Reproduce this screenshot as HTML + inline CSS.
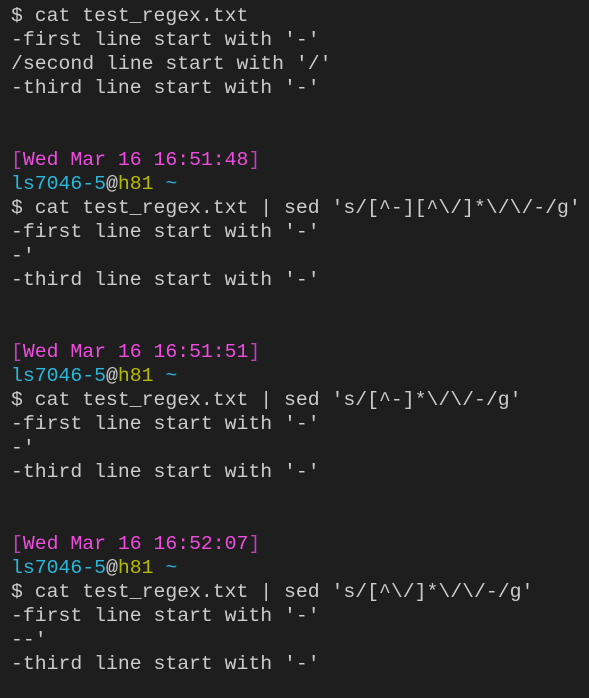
<html><head><style>
body{margin:0;background:#1e1e1e;width:589px;height:698px;overflow:hidden}
pre{margin:0;padding:4px 0 0 11px;font-family:"Liberation Mono",monospace;font-size:19.8px;line-height:24px;color:#cccccc}
.b{color:#bc3fbc}.m{color:#f14ce0}.c{color:#29b8db}.y{color:#b5ba00}
</style></head><body><pre>$ cat test_regex.txt
-first line start with '-'
/second line start with '/'
-third line start with '-'


<span class="b">[</span><span class="m">Wed Mar 16 16:51:48</span><span class="b">]</span>
<span class="c">ls7046-5</span>@<span class="y">h81</span> <span class="c">~</span>
$ cat test_regex.txt | sed 's/[^-][^\/]*\/\/-/g'
-first line start with '-'
-'
-third line start with '-'


<span class="b">[</span><span class="m">Wed Mar 16 16:51:51</span><span class="b">]</span>
<span class="c">ls7046-5</span>@<span class="y">h81</span> <span class="c">~</span>
$ cat test_regex.txt | sed 's/[^-]*\/\/-/g'
-first line start with '-'
-'
-third line start with '-'


<span class="b">[</span><span class="m">Wed Mar 16 16:52:07</span><span class="b">]</span>
<span class="c">ls7046-5</span>@<span class="y">h81</span> <span class="c">~</span>
$ cat test_regex.txt | sed 's/[^\/]*\/\/-/g'
-first line start with '-'
--'
-third line start with '-'</pre></body></html>
